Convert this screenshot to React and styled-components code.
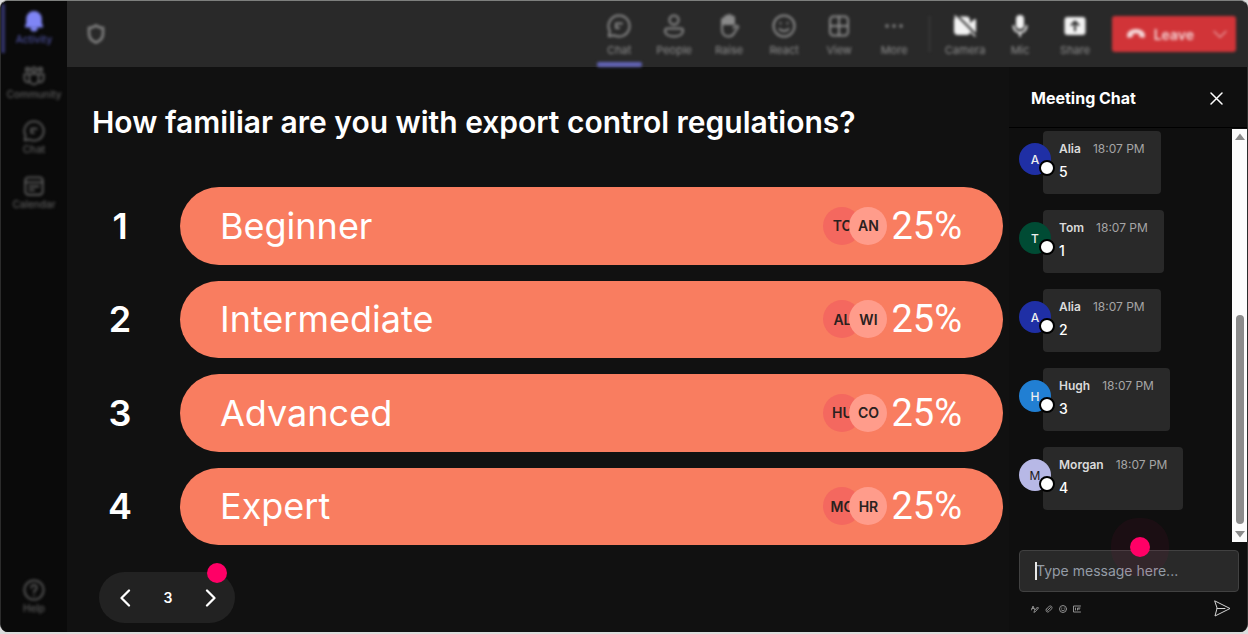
import React from "react";
import styled, { createGlobalStyle } from "styled-components";

const GlobalStyle = createGlobalStyle`
  * {
    box-sizing: border-box;
  }

  body {
    background: #dcdcdc;
    color: #fff;
    font-family: Inter, "Liberation Sans", sans-serif;
    margin: 0;
  }

  button,
  input {
    font-family: inherit;
  }

  button {
    background: none;
    border: 0;
    color: inherit;
    cursor: pointer;
    padding: 0;
  }
`;

const Page = styled.div`
  height: 100vh;
  padding-bottom: 2px;
`;

const Shell = styled.div`
  background: #111;
  border: 1px solid #2c2c2c;
  border-top-color: #7d7f7d;
  border-bottom: 0;
  border-radius: 8px;
  display: flex;
  height: 100%;
  overflow: hidden;
`;

const Rail = styled.nav`
  background: #0a0a0a;
  display: flex;
  flex: 0 0 66px;
  flex-direction: column;
  padding: 3px 0 4px;
`;

const RailButton = styled.button`
  align-items: center;
  border-left: 4px solid ${(props) => (props.$active ? "#33346a" : "transparent")};
  color: ${(props) => (props.$active ? "#7f85f5" : "#5c5c5c")};
  display: flex;
  filter: blur(0.09rem);
  flex-direction: column;
  font-size: 10px;
  font-weight: 500;
  height: 49px;
  line-height: 14px;
  margin-bottom: 6px;
  margin-top: ${(props) => (props.$last ? "auto" : "0")};
  padding: 6px 4px 0 0;

  svg {
    flex: none;
  }

  span {
    color: ${(props) => (props.$active ? "#4b4f9c" : "#5c5c5c")};
  }
`;

const Workspace = styled.div`
  display: flex;
  flex: 1;
  flex-direction: column;
  min-width: 0;
`;

const TopBar = styled.header`
  align-items: center;
  background: #292929;
  display: flex;
  flex: 0 0 66px;
  padding: 0 11px 0 19px;
`;

const Blurred = styled.div`
  align-items: center;
  display: flex;
  filter: blur(0.09rem);
  height: 100%;
  margin-left: ${(props) => (props.$end ? "auto" : "0")};
`;

const ToolButton = styled.button`
  align-items: center;
  border-bottom: 5px solid transparent;
  color: ${(props) => (props.$bright ? "#f2f2f2" : "#8a8a8a")};
  display: flex;
  flex-direction: column;
  font-size: 11px;
  gap: 5px;
  height: 100%;
  line-height: 14px;
  padding-top: 13px;
  position: relative;
  width: 55px;

  span {
    color: #8f8f8f;
  }

  &::after {
    background: ${(props) => (props.$active ? "#6163b5" : "transparent")};
    bottom: -5px;
    border-radius: 2px;
    content: "";
    height: 5px;
    left: 5px;
    position: absolute;
    right: 5px;
  }
`;

const Divider = styled.div`
  background: #454545;
  height: 36px;
  margin: 0 8px 0 7px;
  width: 1px;
`;

const LeaveGroup = styled.div`
  background: #d13438;
  border-radius: 3px;
  display: flex;
  height: 36px;
  margin-left: 9px;
`;

const LeaveButton = styled.button`
  align-items: center;
  color: #f4d4d5;
  display: flex;
  font-size: 14px;
  font-weight: 600;
  gap: 8px;
  padding: 0 10px 0 14px;
`;

const LeaveMenu = styled.button`
  align-items: center;
  color: #e69a9c;
  display: flex;
  padding: 0 8px;
`;

const Body = styled.div`
  display: flex;
  flex: 1;
  min-height: 0;
`;

const Poll = styled.main`
  display: flex;
  flex: 1;
  flex-direction: column;
  min-width: 0;
  padding: 36px 6px 9px 25px;
`;

const Question = styled.h1`
  font-size: 30px;
  font-weight: 600;
  line-height: 38px;
  margin: 0 0 46px;
`;

const Options = styled.ol`
  display: grid;
  flex: 1;
  gap: 16px;
  grid-auto-rows: 1fr;
  list-style: none;
  margin: 0 0 27px;
  padding: 0;
`;

const Option = styled.li`
  align-items: stretch;
  display: flex;
`;

const Rank = styled.div`
  align-items: center;
  display: flex;
  flex: 0 0 88px;
  font-size: 36px;
  font-weight: 600;
  justify-content: center;
  padding-right: 32px;
`;

const Bar = styled.div`
  align-items: center;
  background: #f97d60;
  border-radius: 39px;
  display: flex;
  flex: 1;
  font-size: 36px;
  padding: 0 41px 0 40px;
`;

const OptionName = styled.span`
  flex: 1;
`;

const Voter = styled.span`
  align-items: center;
  background: ${(props) => (props.$front ? "#ff9c8b" : "#f4685f")};
  border-radius: 50%;
  color: #2a2120;
  display: flex;
  font-size: 14px;
  font-weight: 600;
  height: 38px;
  justify-content: center;
  margin-left: ${(props) => (props.$front ? "-12px" : "0")};
  width: 38px;
`;

const Percent = styled.span`
  font-family: Roboto, sans-serif;
  font-size: 38px;
  margin-left: 4px;
`;

const Pager = styled.div`
  align-items: center;
  align-self: flex-start;
  background: #222;
  border-radius: 26px;
  display: flex;
  font-size: 14px;
  font-weight: 600;
  height: 51px;
  justify-content: space-between;
  margin-left: 7px;
  padding: 0 16px 0 18px;
  position: relative;
  width: 136px;

  button {
    display: flex;
  }
`;

const Hotspot = styled.span`
  background: #ff0066;
  border-radius: 50%;
  box-shadow: ${(props) => (props.$halo ? "0 0 0 19px rgba(255, 0, 102, 0.05)" : "none")};
  height: 20px;
  pointer-events: none;
  position: absolute;
  right: ${(props) => (props.$halo ? "89px" : "8px")};
  top: ${(props) => (props.$halo ? "-13px" : "-9px")};
  width: 20px;
`;

const ChatPanel = styled.aside`
  background: #0f0f0f;
  display: flex;
  flex: 0 0 238px;
  flex-direction: column;
`;

const ChatHeader = styled.div`
  align-items: center;
  border-bottom: 1px solid #000;
  display: flex;
  flex: 0 0 61px;
  justify-content: space-between;
  padding: 2px 24px 0 22px;

  h2 {
    font-size: 16px;
    font-weight: 700;
    margin: 0;
  }

  button {
    display: flex;
  }
`;

const ChatScroller = styled.div`
  display: flex;
  flex: 1;
  min-height: 0;
`;

const Messages = styled.ul`
  display: flex;
  flex: 1;
  flex-direction: column;
  gap: 16px;
  justify-content: flex-end;
  list-style: none;
  margin: 0;
  overflow: hidden;
  padding: 0 10px 32px;
`;

const Message = styled.li`
  align-items: flex-start;
  display: flex;
`;

const Avatar = styled.div`
  align-items: center;
  background: ${(props) => props.$color};
  border-radius: 50%;
  color: ${(props) => (props.$dark ? "#1b1b1b" : "#eee")};
  display: flex;
  font-size: 12px;
  font-weight: ${(props) => (props.$dark ? "400" : "500")};
  height: 32px;
  justify-content: center;
  margin: 12px -8px 0 0;
  position: relative;
  width: 32px;
  z-index: 1;

  &::after {
    background: #fff;
    border: 2px solid #000;
    border-radius: 50%;
    bottom: -1px;
    content: "";
    height: 12px;
    position: absolute;
    right: -4px;
    width: 12px;
  }
`;

const Bubble = styled.div`
  background: #292929;
  border-radius: 4px;
  height: 63px;
  padding: 9px 16px;
`;

const BubbleMeta = styled.div`
  color: #a5a5a5;
  display: flex;
  font-size: 12px;
  gap: 12px;
  line-height: 18px;

  strong {
    color: #dadada;
    font-weight: 600;
  }
`;

const BubbleText = styled.p`
  font-size: 14px;
  font-weight: 500;
  line-height: 20px;
  margin: 4px 0 0;
`;

const ScrollTrack = styled.div`
  align-items: center;
  background: #fcfcfc;
  color: #8b8b8b;
  display: flex;
  flex: 0 0 15px;
  flex-direction: column;
  margin-top: 1px;
  padding: 4px 0;
`;

const ScrollThumb = styled.div`
  background: #8b8b8b;
  border-radius: 4px;
  height: 209px;
  margin: auto 0 6px;
  width: 8px;
`;

const Composer = styled.form`
  flex: none;
  padding: 8px 8px 15px 10px;
`;

const Field = styled.div`
  position: relative;
`;

const MessageInput = styled.input`
  background: #292929;
  border: 1px solid #414141;
  border-radius: 4px;
  color: #fff;
  display: block;
  font-size: 14px;
  height: 42px;
  outline: 0;
  padding: 0 16px 2px;
  width: 100%;

  &::placeholder {
    color: #949ca6;
    opacity: 1;
  }
`;

const Caret = styled.span`
  background: #e8e8e8;
  height: 18px;
  left: 16px;
  position: absolute;
  top: 12px;
  width: 2px;
`;

const ComposerTools = styled.div`
  align-items: center;
  color: #8f8f8f;
  display: flex;
  gap: 6px;
  margin-top: 8px;
  padding: 0 8px 0 12px;

  button {
    display: flex;
  }

  button:last-child {
    color: #d5d5d5;
    margin-left: auto;
  }
`;

const Icon = ({ size = 22, box = 24, width = 2, children }) => (
  <svg
    width={size}
    height={size}
    viewBox={`0 0 ${box} ${box}`}
    fill="none"
    stroke="currentColor"
    strokeWidth={width}
    strokeLinecap="round"
    strokeLinejoin="round"
    aria-hidden="true"
  >
    {children}
  </svg>
);

const ChatIcon = ({ size }) => (
  <Icon size={size}>
    <path d="M12 1.5a10.5 10.5 0 1 1-4.8 19.8L1.8 22.3l1-5.2A10.5 10.5 0 0 1 12 1.5z" />
    <path d="M9 9.5h6M9 14h3M9 9.500v4.500" />
  </Icon>
);

const icons = {
  bell: (
    <Icon>
      <path fill="currentColor" d="M12 2a7.5 7.5 0 0 0-7.5 7.5v5L3 18h18l-1.500-3.500v-5A7.500 7.500 0 0 0 12 2z" />
      <path fill="currentColor" d="M9 20a3 2.500 0 0 0 6 0z" />
    </Icon>
  ),
  community: (
    <Icon>
      <circle cx="5" cy="5" r="2" />
      <circle cx="12" cy="5" r="2.500" />
      <circle cx="19" cy="5" r="2" />
      <path d="M7 10h10v6a5 5 0 0 1-10 0zM6 10H1.500v5a4 4 0 0 0 5.500 3.500M18 10h4.500v5a4 4 0 0 1-5.500 3.500" />
    </Icon>
  ),
  chat: <ChatIcon />,
  calendar: (
    <Icon>
      <rect x="2.500" y="2.500" width="19" height="19" rx="3.500" />
      <path d="M2.500 8h19M7 12.500h10M7 16.500h5" />
    </Icon>
  ),
  help: (
    <Icon>
      <circle cx="12" cy="12" r="10.500" />
      <path d="M9 9.500a3 3 0 1 1 4.500 2.600c-1 .6-1.500 1.100-1.500 2.400M12 17.800v.1" />
    </Icon>
  ),
  people: (
    <Icon size={24}>
      <circle cx="12" cy="6" r="4.600" />
      <path d="M5 14.500h14a2 2 0 0 1 2 2c0 3.800-4 6-9 6s-9-2.200-9-6a2 2 0 0 1 2-2z" />
    </Icon>
  ),
  raise: (
    <Icon size={24}>
      <path
        fill="currentColor"
        d="M5 12V6a1.500 1.500 0 0 1 3 0V3.500a1.500 1.500 0 0 1 3 0V2.500a1.500 1.500 0 0 1 3 0v1.500a1.500 1.500 0 0 1 3 0V10H5z"
      />
      <path d="M5 10v5.500C5 20 8 22.500 11.500 22.500c3 0 4.800-1.600 6-4l3.500-5c.8-1.500-1.500-2.500-3-1.200L16.500 14" />
    </Icon>
  ),
  react: (
    <Icon size={24}>
      <circle cx="12" cy="12" r="10.500" />
      <path d="M8.500 9v.5M15.500 9v.5M7.500 15c2.300 2.700 6.700 2.700 9 0" />
    </Icon>
  ),
  view: (
    <Icon size={24}>
      <rect x="3" y="2.500" width="18" height="19" rx="3.500" />
      <path d="M12 2.500v19M3 12h18" />
    </Icon>
  ),
  more: (
    <Icon size={24}>
      <path strokeWidth="3.500" d="M5 12h.01M12 12h.01M19 12h.01" />
    </Icon>
  ),
  camera: (
    <Icon size={24}>
      <path fill="currentColor" d="M5 3.500h8a3 3 0 0 1 3 3V18a2 2 0 0 1-2 2H5a3 3 0 0 1-3-3V6.500a3 3 0 0 1 3-3z" />
      <path fill="currentColor" d="M18 9.500l4-3.500v12l-4-3.500z" />
      <path stroke="#292929" strokeWidth="2" d="M3.500 1l20 20" />
      <path d="M2 2l20 20" strokeWidth="1.500" />
    </Icon>
  ),
  mic: (
    <Icon size={24}>
      <rect x="9" y="2" width="6" height="12" rx="3" fill="currentColor" />
      <path d="M5.500 12a6.500 6.500 0 0 0 13 0M12 18.500V22" />
    </Icon>
  ),
  share: (
    <Icon size={24}>
      <rect x="2.500" y="4" width="19" height="16" rx="2" fill="currentColor" />
      <path stroke="#292929" d="M12 16.500v-8M8.500 11L12 7.500l3.500 3.500" />
    </Icon>
  )
};

const railItems = [
  { icon: "bell", label: "Activity", active: true },
  { icon: "community", label: "Community" },
  { icon: "chat", label: "Chat" },
  { icon: "calendar", label: "Calendar" },
  { icon: "help", label: "Help", last: true }
];

const meetingTools = [
  { icon: "chat", label: "Chat", active: true },
  { icon: "people", label: "People" },
  { icon: "raise", label: "Raise" },
  { icon: "react", label: "React" },
  { icon: "view", label: "View" },
  { icon: "more", label: "More" }
];

const deviceTools = [
  { icon: "camera", label: "Camera" },
  { icon: "mic", label: "Mic" },
  { icon: "share", label: "Share" }
];

const options = [
  { name: "Beginner", voters: ["TO", "AN"], percent: 25 },
  { name: "Intermediate", voters: ["AL", "WI"], percent: 25 },
  { name: "Advanced", voters: ["HU", "CO"], percent: 25 },
  { name: "Expert", voters: ["MO", "HR"], percent: 25 }
];

const messages = [
  { name: "Alia", text: "5", color: "#1f2fa5" },
  { name: "Tom", text: "1", color: "#004b34" },
  { name: "Alia", text: "2", color: "#1f2fa5" },
  { name: "Hugh", text: "3", color: "#217fd3" },
  { name: "Morgan", text: "4", color: "#b7b8e6", dark: true }
];

function ToolList({ tools, bright }) {
  return tools.map((tool) => (
    <ToolButton key={tool.label} $active={tool.active} $bright={bright}>
      {tool.icon === "chat" ? <ChatIcon size={24} /> : icons[tool.icon]}
      <span>{tool.label}</span>
    </ToolButton>
  ));
}

function MeetingBar() {
  return (
    <TopBar>
      <Blurred>
        <svg width="20" height="22" viewBox="0 0 20 22" fill="none" stroke="#858585" strokeWidth="2.500" aria-hidden="true">
          <path d="M10 2.500c2 1.500 4.500 2.300 7 2.500v5.500c0 4.500-3 7.500-7 9-4-1.500-7-4.500-7-9V5c2.500-.2 5-1 7-2.500z" />
        </svg>
      </Blurred>
      <Blurred $end>
        <ToolList tools={meetingTools} />
        <Divider />
        <ToolList tools={deviceTools} bright />
        <LeaveGroup>
          <LeaveButton>
            <svg width="20" height="12" viewBox="0 0 20 12" fill="currentColor" aria-hidden="true">
              <path d="M10 1c5 0 9 2.500 9 6.500 0 1.500-.7 2.500-2 2.300l-2.500-.5c-1-.2-1.500-.9-1.500-1.800V6c-2-.7-4-.7-6 0v1.500c0 .9-.5 1.600-1.500 1.800L3 9.800c-1.300.2-2-.8-2-2.300C1 3.500 5 1 10 1z" />
            </svg>
            Leave
          </LeaveButton>
          <LeaveMenu aria-label="Leave options">
            <Icon size={16}>
              <path d="M3 8l9 9 9-9" />
            </Icon>
          </LeaveMenu>
        </LeaveGroup>
      </Blurred>
    </TopBar>
  );
}

function PollView() {
  return (
    <Poll>
      <Question>How familiar are you with export control regulations?</Question>
      <Options>
        {options.map((option, index) => (
          <Option key={option.name}>
            <Rank>{index + 1}</Rank>
            <Bar>
              <OptionName>{option.name}</OptionName>
              <Voter>{option.voters[0]}</Voter>
              <Voter $front>{option.voters[1]}</Voter>
              <Percent>{option.percent}%</Percent>
            </Bar>
          </Option>
        ))}
      </Options>
      <Pager>
        <button aria-label="Previous question">
          <Icon size={18} width={3}>
            <path d="M16 2L6 12l10 10" />
          </Icon>
        </button>
        <span>3</span>
        <button aria-label="Next question">
          <Icon size={18} width={3}>
            <path d="M8 2l10 10L8 22" />
          </Icon>
        </button>
        <Hotspot />
      </Pager>
    </Poll>
  );
}

function MeetingChat() {
  return (
    <ChatPanel>
      <ChatHeader>
        <h2>Meeting Chat</h2>
        <button aria-label="Close chat">
          <Icon size={13} box={13} width={1.5}>
            <path d="M1 1l11 11M12 1L1 12" />
          </Icon>
        </button>
      </ChatHeader>
      <ChatScroller>
        <Messages>
          {messages.map((message, index) => (
            <Message key={index}>
              <Avatar $color={message.color} $dark={message.dark}>
                {message.name[0]}
              </Avatar>
              <Bubble>
                <BubbleMeta>
                  <strong>{message.name}</strong>
                  <span>18:07 PM</span>
                </BubbleMeta>
                <BubbleText>{message.text}</BubbleText>
              </Bubble>
            </Message>
          ))}
        </Messages>
        <ScrollTrack aria-hidden="true">
          <svg width="10" height="8" viewBox="0 0 10 8" fill="currentColor">
            <path d="M5 0.500l5 6.500H0z" />
          </svg>
          <ScrollThumb />
          <svg width="10" height="8" viewBox="0 0 10 8" fill="currentColor">
            <path d="M5 7.500L0 1h10z" />
          </svg>
        </ScrollTrack>
      </ChatScroller>
      <Composer onSubmit={(event) => event.preventDefault()}>
        <Field>
          <MessageInput aria-label="Message" placeholder="Type message here..." />
          <Caret />
          <Hotspot $halo />
        </Field>
        <ComposerTools>
          <button type="button" aria-label="Format">
            <Icon size={8} box={16}>
              <path d="M1 10L4 2l3 7M2 7h4M6 14l1-3 6-7 2 2-6 7z" />
            </Icon>
          </button>
          <button type="button" aria-label="Attach">
            <Icon size={8} box={16}>
              <path d="M5 11l6-6M3 8l5-5c4-3 8 1 5 5l-5 5c-4 3-8-1-5-5z" />
            </Icon>
          </button>
          <button type="button" aria-label="Emoji">
            <Icon size={8} box={16}>
              <circle cx="8" cy="8" r="7" />
              <path d="M5.500 6v.5M10.500 6v.5M5 10c2 2 4 2 6 0" />
            </Icon>
          </button>
          <button type="button" aria-label="GIF">
            <Icon size={8} box={16}>
              <path d="M15 2H1v12h14M5 6v4M9 10V6h5M9 8h4" />
            </Icon>
          </button>
          <button type="submit" aria-label="Send">
            <Icon size={17} box={17} width={1}>
              <path d="M1 1l15 7.500L1 16l2-7.500zM3 8.500h8" />
            </Icon>
          </button>
        </ComposerTools>
      </Composer>
    </ChatPanel>
  );
}

export default function App() {
  return (
    <>
      <GlobalStyle />
      <Page>
        <Shell>
          <Rail aria-label="Main">
            {railItems.map((item) => (
              <RailButton key={item.label} $active={item.active} $last={item.last}>
                {icons[item.icon]}
                <span>{item.label}</span>
              </RailButton>
            ))}
          </Rail>
          <Workspace>
            <MeetingBar />
            <Body>
              <PollView />
              <MeetingChat />
            </Body>
          </Workspace>
        </Shell>
      </Page>
    </>
  );
}
